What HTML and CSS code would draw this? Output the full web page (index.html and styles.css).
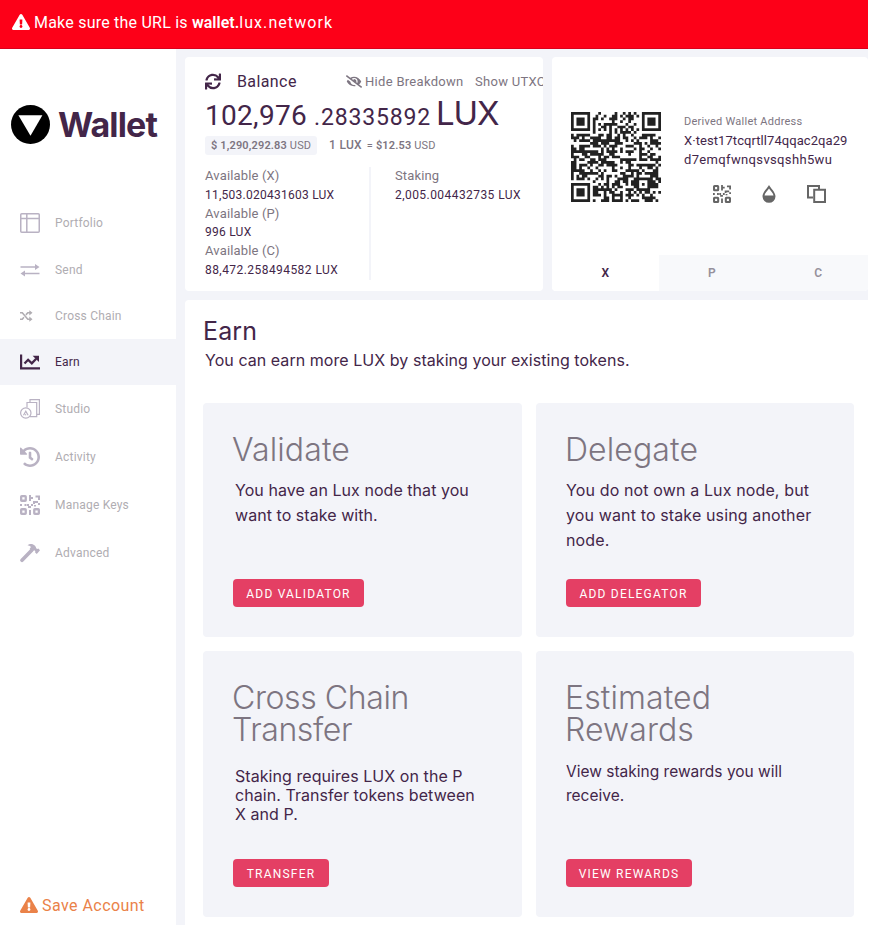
FILE: index.html
```html
<!DOCTYPE html>
<html lang="en">
<head>
<meta charset="utf-8">
<title>Lux Wallet</title>
<link rel="stylesheet" href="styles.css">
</head>
<body>
<svg class="defs" aria-hidden="true">
  <symbol id="warn" viewBox="0 0 576 512"><path fill="currentColor" d="M569.517 440.013C587.975 472.007 564.806 512 527.94 512H48.054c-36.937 0-59.999-40.055-41.577-71.987L246.423 23.985c18.467-32.009 64.72-31.951 83.154 0l239.94 416.028zM288 354c-25.405 0-46 20.595-46 46s20.595 46 46 46 46-20.595 46-46-20.595-46-46-46zm-43.673-165.346l7.418 136c.347 6.364 5.609 11.346 11.982 11.346h48.546c6.373 0 11.635-4.982 11.982-11.346l7.418-136c.375-6.874-5.098-12.654-11.982-12.654h-63.383c-6.884 0-12.356 5.78-11.981 12.654z"/></symbol>
  <symbol id="qricon" viewBox="0 0 20 20">
    <g fill="none" stroke="currentColor" stroke-width="2.300"><rect x="1.150" y="1.150" width="4.600" height="4.600" rx=".6"/><rect x="1.150" y="14.250" width="4.600" height="4.600" rx=".6"/><rect x="14.250" y="14.250" width="4.600" height="4.600" rx=".6"/></g>
    <path fill="currentColor" d="M9 0h2v2h2v2h-2v2H9zM15.500.500H20V5h-2V2.500h-2.500zM13 6h5v2h-3v1h-2v2h-2V9h2zM0 9h2v2H0zM4.500 9h2v2h-2zM7 9h2v2h2v2H8v-2H7zM18 8h2v2h-2zM9 15h2v5H9zM14 10h2v1.500h-2z"/>
  </symbol>
</svg>
<div class="app">
  <header class="banner"><svg class="warn"><use href="#warn"/></svg><p><span class="lead">Make sure the URL is </span><b>wallet.</b><span class="host">lux.network</span></p></header>
  <div class="body">
    <aside class="sidebar">
      <div class="logo"><svg viewBox="0 0 38 38"><circle cx="19" cy="19" r="19"/><path fill="#fff" d="M7.200 10h23.400L19 30z"/></svg><span>Wallet</span></div>
      <nav>
        <a class="item"><svg viewBox="0 0 20 20" fill="none" stroke="currentColor" stroke-width="1.500"><rect x=".75" y=".75" width="18.500" height="18.500" rx="1"/><path d="M1 5.600h18M6.800 1v18"/></svg><span>Portfolio</span></a>
        <a class="item"><svg viewBox="0 0 20 20"><path d="M.5 7h15M4.500 13.400h15" fill="none" stroke="currentColor" stroke-width="1.500"/><path fill="currentColor" d="M15 4l4.500 3-4.500 3zM5 10.400L.5 13.400l4.500 3z"/></svg><span>Send</span></a>
        <a class="item gray"><svg viewBox="0 0 20 20"><path d="M0 6.800h2.300L7.800 13.200H10M0 13.200h2.300l1.600-1.900M5.900 8.900L7.800 6.800H10" fill="none" stroke="currentColor" stroke-width="1.600"/><path fill="currentColor" d="M9.300 4.300l3.200 2.500-3.200 2.600zM9.300 10.600l3.200 2.600-3.200 2.500z"/></svg><span>Cross Chain</span></a>
        <a class="item active"><svg viewBox="0 0 20 20"><path d="M1.100 2.500v13.800H20" fill="none" stroke="currentColor" stroke-width="2.200"/><path d="M4.500 11.500l3.600-3.700 3.700 3.600 4.400-4.700" fill="none" stroke="currentColor" stroke-width="2.300"/><path fill="currentColor" d="M12.600 3.700H19v6.400z"/></svg><span>Earn</span></a>
        <a class="item tall"><svg viewBox="0 0 20 20" fill="none" stroke="currentColor" stroke-width="1.200"><path d="M10 3V.7h9.400v14.600H17"/><path d="M7 8.500V3.500h9.700v14.200H10"/><circle cx="5.800" cy="14" r="5.200"/><path d="M3.500 16.200l2.300-4 2.300 4M5.300 15.200l.6 1"/></svg><span>Studio</span></a>
        <a class="item tall"><svg viewBox="8 8 496 496"><path fill="currentColor" d="M504 255.531c.253 136.640-111.180 248.372-247.820 248.468-59.015.042-113.223-20.530-155.822-54.911-11.077-8.940-11.905-25.541-1.839-35.607l11.267-11.267c8.609-8.609 22.353-9.551 31.891-1.984C173.062 425.135 212.781 440 256 440c101.705 0 184-82.311 184-184 0-101.705-82.311-184-184-184-48.814 0-93.149 18.969-126.068 49.932l50.754 50.754c10.080 10.080 2.941 27.314-11.313 27.314H24c-8.837 0-16-7.163-16-16V38.627c0-14.254 17.234-21.393 27.314-11.314l49.372 49.372C129.209 34.136 189.552 8 256 8c136.810 0 247.747 110.780 248 247.531zm-180.912 78.784l9.823-12.630c8.138-10.463 6.253-25.542-4.210-33.679L288 256.349V152c0-13.255-10.745-24-24-24h-16c-13.255 0-24 10.745-24 24v135.651l65.409 50.874c10.463 8.137 25.541 6.253 33.679-4.210z"/></svg><span>Activity</span></a>
        <a class="item tall"><svg><use href="#qricon"/></svg><span>Manage Keys</span></a>
        <a class="item last"><svg viewBox="0 0 20 20"><path d="M2 17.300L11.500 7.500" stroke="currentColor" stroke-width="3.600" stroke-linecap="round"/><path fill="currentColor" d="M7.500 2.200C9 .8 11.200.7 12.700 1.200c1.800.6 3.300 2.300 3.500 4.100l1 .8 1.200-.5L20 7.300 16.800 11l-1.700-1.500.2-1.300-1-1-2.100 1.300L9.600 6l1.300-2.100C10 2.900 8.700 2.500 7.500 2.200z"/></svg><span>Advanced</span></a>
      </nav>
      <a class="save"><svg class="warn"><use href="#warn"/></svg><span>Save Account</span></a>
    </aside>
    <main>
      <div class="top">
        <section class="card balance">
          <div class="bar"><svg class="sync" viewBox="0 0 512 512"><path fill="currentColor" d="M440.650 12.570l4 82.770A247.160 247.160 0 0 0 255.830 8C134.730 8 33.910 94.920 12.290 209.820A12 12 0 0 0 24.090 224h49.050a12 12 0 0 0 11.670-9.260 175.910 175.910 0 0 1 317-56.940l-101.460-4.860a12 12 0 0 0-12.570 12v47.410a12 12 0 0 0 12 12H500a12 12 0 0 0 12-12V12a12 12 0 0 0-12-12h-47.370a12 12 0 0 0-11.980 12.570zM255.830 432a175.610 175.610 0 0 1-146-77.800l101.800 4.870a12 12 0 0 0 12.570-12v-47.400a12 12 0 0 0-12-12H12a12 12 0 0 0-12 12V500a12 12 0 0 0 12 12h47.350a12 12 0 0 0 12-12.600l-4.150-82.570A247.170 247.170 0 0 0 255.830 504c121.110 0 221.930-86.920 243.550-201.820a12 12 0 0 0-11.800-14.180h-49.050a12 12 0 0 0-11.670 9.260A175.860 175.860 0 0 1 255.830 432z"/></svg><h4>Balance</h4><svg class="eye" viewBox="0 0 640 512"><path fill="currentColor" d="M320 400c-75.850 0-137.250-58.710-142.900-133.110L72.200 185.820c-13.790 17.300-26.480 35.590-36.720 55.590a32.350 32.350 0 0 0 0 29.190C89.710 376.410 197.070 448 320 448c26.910 0 52.870-4 77.890-10.460L346 397.390a144.130 144.130 0 0 1-26 2.610zm313.820 58.100l-110.550-85.440a331.250 331.250 0 0 0 81.250-102.070 32.350 32.350 0 0 0 0-29.190C550.290 135.590 442.930 64 320 64a308.150 308.150 0 0 0-147.320 37.700L45.460 3.370A16 16 0 0 0 23 6.180L3.370 31.450A16 16 0 0 0 6.180 53.900l588.360 454.730a16 16 0 0 0 22.460-2.810l19.640-25.270a16 16 0 0 0-2.820-22.450zm-183.720-142l-39.300-30.380A94.750 94.750 0 0 0 416 256a94.760 94.760 0 0 0-121.310-92.210A47.650 47.650 0 0 1 304 192a46.640 46.640 0 0 1-1.540 10l-73.610-56.890A142.310 142.310 0 0 1 320 112a143.920 143.920 0 0 1 144 144c0 21.630-5.290 41.790-13.900 60.110z"/></svg><span class="hide">Hide Breakdown</span><span class="utxo">Show UTXOs</span></div>
          <div class="amount"><span class="whole">102,976</span><span class="frac">.28335892</span><span class="unit">LUX</span></div>
          <div class="fiat"><span class="pill"><b>$ 1,290,292.83</b> USD</span><span class="rate"><span class="one">1 LUX</span> = <b>$12.53</b> USD</span></div>
          <div class="breakdown">
            <dl><dt>Available (X)</dt><dd class="bx">11,503.020431603 LUX</dd><dt>Available (P)</dt><dd>996 LUX</dd><dt>Available (C)</dt><dd class="bc">88,472.258494582 LUX</dd></dl>
            <dl class="staking"><dt>Staking</dt><dd class="bc">2,005.004432735 LUX</dd></dl>
          </div>
        </section>
        <section class="card address">
          <div class="info">
            <svg class="qr" id="qr" viewBox="0 0 33 33"></svg>
            <div class="text"><small>Derived Wallet Address</small><p><span class="a1">X·test17tcqrtll74qqac2qa29</span><br><span class="a2">d7emqfwnqsvsqshh5wu</span></p>
              <div class="tools"><svg class="t1"><use href="#qricon"/></svg><svg class="t2" viewBox="0 0 14 18"><path fill="currentColor" fill-rule="evenodd" d="M7 0C5.800 2.600.5 7.200.5 11.300a6.500 6.500 0 0 0 13 0C13.500 7.200 8.200 2.600 7 0zM7 3.600c1.500 2.200 4.300 4.900 4.500 6.800h-9C2.700 8.500 5.500 5.800 7 3.600z"/></svg><svg class="t3" viewBox="0 0 19 18" fill="none" stroke="currentColor" stroke-width="2"><path d="M6 12.500H1V1h11v3.500"/><path d="M7.200 4.800H18V17H7.200z"/></svg></div>
            </div>
          </div>
          <div class="tabs"><a class="on">X</a><a>P</a><a>C</a></div>
        </section>
      </div>
      <section class="earn">
        <h1>Earn</h1>
        <p class="intro">You can earn more LUX by staking your existing tokens.</p>
        <div class="grid">
          <article><h2>Validate</h2><p class="d-val">You have an Lux node that you<br>want to stake with.</p><button class="b-val">ADD VALIDATOR</button></article>
          <article><h2>Delegate</h2><p class="d-del">You do not own a Lux node, but<br>you want to stake using another<br>node.</p><button class="b-del">ADD DELEGATOR</button></article>
          <article><h2 class="tight">Cross Chain<br>Transfer</h2><p class="d-cross">Staking requires LUX on the P<br>chain. Transfer tokens between<br>X and P.</p><button class="b-tra">TRANSFER</button></article>
          <article><h2>Estimated<br>Rewards</h2><p class="d-est">View staking rewards you will<br>receive.</p><button class="b-rew">VIEW REWARDS</button></article>
        </div>
      </section>
    </main>
  </div>
</div>
<script src="qr.js"></script>
</body>
</html>
```
FILE: styles.css
```css
* { box-sizing: border-box; margin: 0; padding: 0; }
body { background: #fff; font-family: Roboto, "Liberation Sans", sans-serif; color: #432649; overflow: hidden; }
svg { display: block; flex: none; }
.defs { position: absolute; width: 0; height: 0; }
.app { width: 868px; height: 925px; display: flex; flex-direction: column; overflow: hidden; white-space: nowrap; }
.banner { height: 49px; flex: none; background: #fd0018; border-bottom: 1px solid #d9001c; color: #fff; display: flex; align-items: center; padding: 0 0 4px 12px; font-size: 16px; }
.banner p { margin-left: 4px; }
.lead { letter-spacing: .22px; white-space: pre; }
.banner b { font-weight: 600; letter-spacing: 0; }
.host { letter-spacing: 1.080px; }
.warn { width: 18px; height: 16px; }
.body { flex: 1; display: flex; min-height: 0; }
.sidebar { width: 176px; flex: none; display: flex; flex-direction: column; }
.logo { height: 150px; display: flex; align-items: center; padding-left: 11px; gap: 8px; }
.logo svg { width: 39px; height: 39px; }
.logo span { font: 700 34px Inter, sans-serif; letter-spacing: -.85px; }
.item { height: 46px; display: flex; align-items: center; padding-left: 20px; gap: 15px; color: #b9b2c3; font-size: 12px; letter-spacing: .2px; }
.item:first-child { height: 48px; }
.item.tall { height: 48px; }
.item.last { height: 47px; }
.item svg { width: 20px; height: 20px; }
.item span { color: #b0adb2; }
.item.gray { color: #b0adb2; }
.item.active { background: #f3f4f9; color: #432649; }
.item.active span { color: #432649; }
.save { margin-top: auto; height: 40px; padding: 0 0 0 20px; display: flex; align-items: center; gap: 4px; color: #ea8249; font-size: 16px; letter-spacing: .45px; }
main { flex: 1; min-width: 0; background: #f3f4f9; padding: 8px 0 0 9px; display: flex; flex-direction: column; }
.top { display: flex; gap: 9px; height: 234px; flex: none; }
.card { background: #fff; border-radius: 4px; overflow: hidden; }
.balance { width: 358px; flex: none; padding: 12px 0 0 20px; }
.bar { display: flex; align-items: center; height: 24px; color: #7d7581; font-size: 13px; }
.bar > * { flex: none; }
.sync { width: 16px; height: 17px; color: #432649; }
h4 { font-size: 16px; font-weight: 400; color: #432649; margin-left: 16px; width: 109px; letter-spacing: .4px; }
.eye { width: 16px; height: 13px; }
.hide { margin-left: 3px; width: 110px; letter-spacing: .3px; }
.utxo { letter-spacing: .3px; }
.amount { display: flex; align-items: baseline; height: 41px; line-height: 41px; }
.whole { font-size: 28px; width: 109px; letter-spacing: .3px; }
.frac { font-size: 23px; width: 122px; letter-spacing: .85px; }
.unit { font: 400 33px/41px Inter, sans-serif; letter-spacing: -1.100px; }
.fiat { display: flex; align-items: center; height: 22px; font-size: 11px; color: #7d7581; letter-spacing: .15px; }
.fiat b { font-weight: 600; }
.pill { background: #f3f4f9; border-radius: 3px; width: 112px; height: 19px; line-height: 19px; padding-left: 6px; }
.rate { margin-left: 12px; }
.one { font-size: 12px; letter-spacing: .3px; margin-right: 2px; font-weight: 500; }
.breakdown { display: flex; margin-top: 11px; height: 113px; }
.breakdown dl { width: 166px; border-right: 2px solid #f3f4f9; line-height: 18.750px; }
.breakdown .staking { border: 0; padding-left: 24px; }
dt { font-size: 13px; color: #7d7581; letter-spacing: .15px; }
dd { font-size: 12px; letter-spacing: .25px; }
.bc { letter-spacing: .44px; }
.address { flex: 1; display: flex; flex-direction: column; }
.info { flex: 1; display: flex; padding: 55px 0 0 19px; }
.qr { width: 90px; height: 90px; }
.text { margin-left: 23px; }
.text small { display: block; font-size: 11px; line-height: 19px; color: #7d7581; letter-spacing: .25px; }
.text p { font-size: 13px; line-height: 19px; }
.a1 { letter-spacing: .07px; }
.a2 { letter-spacing: .35px; }
.tools { display: flex; align-items: center; color: #666; margin-top: 15px; padding-left: 29px; height: 20px; }
.t1 { width: 18px; height: 18px; }
.t2 { width: 14px; height: 18px; margin-left: 31px; }
.t3 { width: 19px; height: 18px; margin-left: 31px; }
.tabs { display: flex; height: 36px; }
.tabs a { flex: none; width: 106.500px; line-height: 36px; text-align: center; background: #f8f9fb; color: #96919b; font-size: 12px; font-weight: 600; }
.tabs .on { background: #fff; color: #432649; }
.earn { flex: 1; margin-top: 9px; background: #fff; border-top-left-radius: 4px; padding: 15px 14px 0 18px; font-family: Inter, sans-serif; }
h1 { font-size: 25px; line-height: 32px; font-weight: 400; letter-spacing: .1px; }
.intro { font-size: 16px; line-height: 24px; padding-left: 2px; margin-top: 1px; letter-spacing: .05px; }
.grid { display: grid; grid-template: 234px 266px / 319px 318px; gap: 14px; margin-top: 31px; }
article { background: #f3f4f9; border-radius: 4px; padding: 30px; display: flex; flex-direction: column; align-items: flex-start; }
h2 { font-size: 32px; line-height: 32px; font-weight: 300; color: #7d7581; padding-top: 1px; margin-left: -1px; letter-spacing: .1px; }
.tight { letter-spacing: -.4px; }
article p { font-size: 16px; line-height: 25px; }
.d-val, .d-del { margin-top: 12px; letter-spacing: .05px; }
article .d-del { letter-spacing: .130px; }
.d-val, .d-cross { padding-left: 2px; }
article .d-cross { line-height: 19px; margin-top: 21px; letter-spacing: .06px; }
article .d-est { line-height: 24px; margin-top: 14px; font-size: 15.500px; }
button { margin-top: auto; border: 0; border-radius: 4px; background: #e43f64; color: #fff; height: 28px; font: 400 12px Roboto, sans-serif; letter-spacing: 1.200px; padding-top: 1px; }
.b-val { width: 131px; }
.b-del { width: 135px; }
.b-tra { width: 96px; }
.b-rew { width: 126px; }
```
FILE: qr.js
```js
// Draws the wallet address as a version 4 QR code (33 modules, level M).
(function () {
  var text = 'X-fuji17tcqrtll74qqac2qa29d7emqfwnqsvsqshh5wu';
  var N = 33, DATA = 32, EC = 18;

  function mul(a, b) {
    var z = 0;
    for (var i = 7; i >= 0; i--) {
      z = (z << 1) ^ ((z >>> 7) * 0x11d);
      z ^= ((b >>> i) & 1) * a;
    }
    return z;
  }
  var gen = [];
  for (var i = 0; i < EC; i++) gen.push(i === EC - 1 ? 1 : 0);
  var root = 1;
  for (i = 0; i < EC; i++) {
    for (var j = 0; j < EC; j++) {
      gen[j] = mul(gen[j], root);
      if (j + 1 < EC) gen[j] ^= gen[j + 1];
    }
    root = mul(root, 2);
  }
  function ecc(data) {
    var r = gen.map(function () { return 0; });
    data.forEach(function (b) {
      var f = b ^ r.shift();
      r.push(0);
      gen.forEach(function (g, k) { r[k] ^= mul(g, f); });
    });
    return r;
  }

  var bits = [];
  function put(v, n) { for (var k = n - 1; k >= 0; k--) bits.push((v >>> k) & 1); }
  put(4, 4);
  put(text.length, 8);
  for (i = 0; i < text.length; i++) put(text.charCodeAt(i), 8);
  put(0, 4);
  while (bits.length % 8) bits.push(0);
  for (var pad = 0xec; bits.length < DATA * 16; pad ^= 0xfd) put(pad, 8);
  var bytes = [];
  for (i = 0; i < bits.length; i += 8) bytes.push(parseInt(bits.slice(i, i + 8).join(''), 2));
  var b1 = bytes.slice(0, DATA), b2 = bytes.slice(DATA);
  var e1 = ecc(b1), e2 = ecc(b2), words = [];
  for (i = 0; i < DATA; i++) words.push(b1[i], b2[i]);
  for (i = 0; i < EC; i++) words.push(e1[i], e2[i]);

  var masks = [
    function (x, y) { return (x + y) % 2; },
    function (x, y) { return y % 2; },
    function (x) { return x % 3; },
    function (x, y) { return (x + y) % 3; },
    function (x, y) { return (Math.floor(x / 3) + Math.floor(y / 2)) % 2; },
    function (x, y) { return x * y % 2 + x * y % 3; },
    function (x, y) { return (x * y % 2 + x * y % 3) % 2; },
    function (x, y) { return ((x + y) % 2 + x * y % 3) % 2; }
  ];

  function build(mask) {
    var m = [], fn = [], x, y;
    for (y = 0; y < N; y++) { m.push(new Array(N).fill(0)); fn.push(new Array(N).fill(false)); }
    function set(x, y, v) { if (x >= 0 && y >= 0 && x < N && y < N) { m[y][x] = v ? 1 : 0; fn[y][x] = true; } }
    for (var i = 0; i < N; i++) { set(6, i, i % 2 === 0); set(i, 6, i % 2 === 0); }
    [[3, 3], [N - 4, 3], [3, N - 4]].forEach(function (c) {
      for (var dy = -4; dy <= 4; dy++) for (var dx = -4; dx <= 4; dx++) {
        var d = Math.max(Math.abs(dx), Math.abs(dy));
        set(c[0] + dx, c[1] + dy, d !== 2 && d !== 4);
      }
    });
    for (var dy = -2; dy <= 2; dy++) for (var dx = -2; dx <= 2; dx++)
      set(26 + dx, 26 + dy, Math.max(Math.abs(dx), Math.abs(dy)) !== 1);
    var rem = mask;
    for (i = 0; i < 10; i++) rem = (rem << 1) ^ ((rem >>> 9) * 0x537);
    var f = (mask << 10 | rem) ^ 0x5412;
    function bit(k) { return (f >>> k) & 1; }
    for (i = 0; i <= 5; i++) set(8, i, bit(i));
    set(8, 7, bit(6)); set(8, 8, bit(7)); set(7, 8, bit(8));
    for (i = 9; i < 15; i++) set(14 - i, 8, bit(i));
    for (i = 0; i < 8; i++) set(N - 1 - i, 8, bit(i));
    for (i = 8; i < 15; i++) set(8, N - 15 + i, bit(i));
    set(8, N - 8, 1);
    var p = 0;
    for (var right = N - 1; right >= 1; right -= 2) {
      if (right === 6) right = 5;
      for (var v = 0; v < N; v++) for (var j = 0; j < 2; j++) {
        x = right - j;
        y = ((right + 1) & 2) === 0 ? N - 1 - v : v;
        if (fn[y][x]) continue;
        var d = p < words.length * 8 ? (words[p >>> 3] >>> (7 - (p & 7))) & 1 : 0;
        p++;
        m[y][x] = d ^ (masks[mask](x, y) === 0 ? 1 : 0);
      }
    }
    return m;
  }

  function penalty(m) {
    var s = 0, dark = 0, x, y;
    function line(str) {
      (str.match(/0{5,}|1{5,}/g) || []).forEach(function (r) { s += r.length - 2; });
      for (var k = 0; k + 11 <= str.length; k++) {
        var w = str.substr(k, 11);
        if (w === '10111010000' || w === '00001011101') s += 40;
      }
    }
    for (y = 0; y < N; y++) {
      line(m[y].join(''));
      line(m.map(function (r) { return r[y]; }).join(''));
      for (x = 0; x < N; x++) {
        dark += m[y][x];
        if (x && y) {
          var q = m[y][x] + m[y - 1][x] + m[y][x - 1] + m[y - 1][x - 1];
          if (q === 0 || q === 4) s += 3;
        }
      }
    }
    return s + Math.abs(Math.ceil(dark * 100 / (N * N) / 5) - 10) * 10;
  }

  var best = null, low = Infinity;
  for (i = 0; i < 8; i++) {
    var c = build(i), s = penalty(c);
    if (s < low) { low = s; best = c; }
  }
  var d = '';
  best.forEach(function (row, y) {
    for (var x = 0; x < N; x++) {
      if (!row[x]) continue;
      var e = x;
      while (e < N && row[e]) e++;
      d += 'M' + x + ' ' + y + 'H' + e + 'V' + (y + 1) + 'H' + x + 'z';
      x = e;
    }
  });
  var path = document.createElementNS('http://www.w3.org/2000/svg', 'path');
  path.setAttribute('d', d);
  path.setAttribute('fill', '#222');
  document.getElementById('qr').appendChild(path);
})();
```
